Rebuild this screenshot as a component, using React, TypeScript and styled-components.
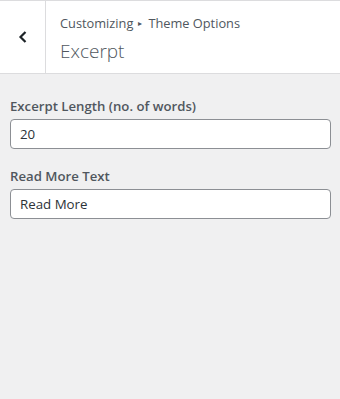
import React from "react";
import styled, { createGlobalStyle } from "styled-components";

const Global = createGlobalStyle`
  html, body { margin: 0; padding: 0; background: #f0f0f1; }
  body { font-family: "Open Sans", "Noto Sans", sans-serif; color: #50575e; }
  * { box-sizing: border-box; }
`;

const Page = styled.div`
  width: 340px;
  height: 399px;
  background: #f0f0f1;
`;

const Header = styled.div`
  display: flex;
  height: 74px;
  background: #fff;
  border-top: 1px solid #dcdcde;
  border-bottom: 1px solid #dcdcde;
`;

const BackButton = styled.button`
  width: 46px;
  flex: none;
  display: flex;
  align-items: center;
  justify-content: center;
  background: #fff;
  border: none;
  border-right: 1px solid #dcdcde;
  padding: 0;
  color: #1d2327;
`;

const Titles = styled.div`
  display: flex;
  flex-direction: column;
  padding: 13px 0 0 14px;
`;

const Crumb = styled.div`
  font-size: 12.8px;
  line-height: 18px;
  color: #50575e;
`;

const Arrow = styled.span`
  font-size: 8px;
  margin: 0 6px 0 5px;
  position: relative;
  top: -2px;
`;

const Title = styled.div`
  font-size: 19px;
  font-weight: 300;
  line-height: 28px;
  color: #50575e;
  margin-top: 3px;
`;

const Body = styled.div`
  padding: 22px 9px 0 10px;
  display: flex;
  flex-direction: column;
`;

const Field = styled.div`
  display: flex;
  flex-direction: column;
  margin-bottom: 17px;
`;

const Label = styled.label`
  font-size: 13.2px;
  font-weight: 600;
  line-height: 20px;
  color: #50575e;
  margin-bottom: 3px;
`;

const Input = styled.input`
  width: 100%;
  height: 30px;
  border: 1px solid #8c8f94;
  border-radius: 4px;
  background: #fff;
  font-family: inherit;
  font-size: 13.3px;
  color: #2c3338;
  padding: 0 9px;
`;

export default function App() {
  return (
    <Page>
      <Global />
      <Header>
        <BackButton aria-label="Back">
          <svg width="12" height="14" viewBox="0 0 12 14">
            <path d="M8.5 2 L3.5 7 L8.5 12" fill="none" stroke="#1d2327" strokeWidth="2.2" />
          </svg>
        </BackButton>
        <Titles>
          <Crumb>
            Customizing<Arrow>▸</Arrow>Theme Options
          </Crumb>
          <Title>Excerpt</Title>
        </Titles>
      </Header>
      <Body>
        <Field>
          <Label>Excerpt Length (no. of words)</Label>
          <Input defaultValue="20" />
        </Field>
        <Field>
          <Label>Read More Text</Label>
          <Input defaultValue="Read More" />
        </Field>
      </Body>
    </Page>
  );
}
